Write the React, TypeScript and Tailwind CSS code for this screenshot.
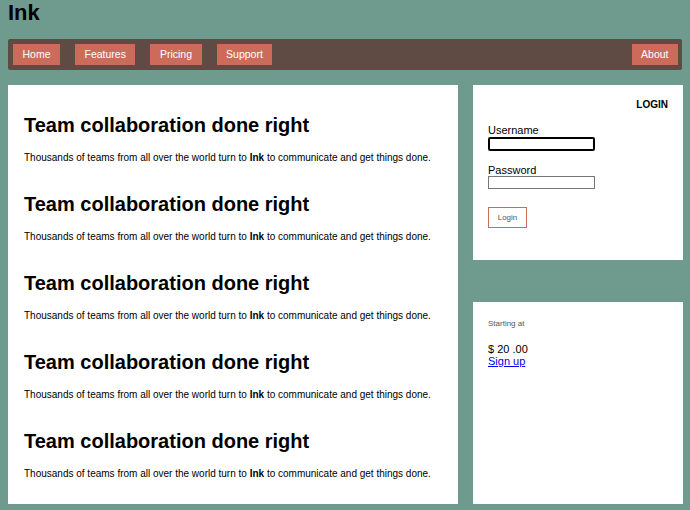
import React from "react";

const navItems = ["Home", "Features", "Pricing", "Support"];

const NavButton = ({ children }: { children: React.ReactNode }) => (
  <a className="flex h-[21px] items-center bg-[#cd6b5a] px-[9.5px] text-[10.5px] text-white">
    {children}
  </a>
);

const Feature = () => (
  <section>
    <h2 className="text-[20px] font-bold leading-[24px] text-black">
      Team collaboration done right
    </h2>
    <p className="mt-[15px] text-[10px] leading-[12px] text-black">
      Thousands of teams from all over the world turn to <b>Ink</b> to
      communicate and get things done.
    </p>
  </section>
);

export default function App() {
  return (
    <div className="min-h-[510px] bg-[#6f9a8e] font-['Liberation_Sans',Arial,sans-serif]">
      {/* Title */}
      <h1 className="px-[8px] pt-[1px] text-[22px] font-bold leading-[24px] text-black">
        Ink
      </h1>

      {/* Top nav */}
      <nav className="mx-[8px] mt-[14px] flex h-[31px] items-center rounded-[2px] bg-[#5f4b44] pl-[5px] pr-[4px]">
        <div className="flex gap-[15px]">
          {navItems.map((item) => (
            <NavButton key={item}>{item}</NavButton>
          ))}
        </div>
        <div className="ml-auto">
          <NavButton>About</NavButton>
        </div>
      </nav>

      {/* Body */}
      <div className="ml-[8px] mt-[15px] flex gap-[15px] pb-[6px]">
        <main className="flex h-[419px] w-[450px] shrink-0 flex-col gap-[28px] bg-white px-[16px] pt-[28px]">
          <Feature />
          <Feature />
          <Feature />
          <Feature />
          <Feature />
        </main>

        <aside className="flex w-[210px] shrink-0 flex-col gap-[42px]">
          {/* Login card */}
          <div className="h-[175px] bg-white px-[15px] pt-[14px]">
            <div className="text-right text-[10px] font-bold leading-[12px] text-black">
              LOGIN
            </div>
            <form className="mt-[14px] flex flex-col">
              <label className="text-[11px] leading-[11px] text-black">Username</label>
              <input
                type="text"
                className="mt-[1px] h-[14px] w-[107px] rounded-[2px] border-2 border-black bg-white outline-none"
              />
              <label className="mt-[14px] text-[11px] leading-[11px] text-black">Password</label>
              <input
                type="password"
                className="mt-0 h-[13px] w-[107px] border border-[#767676] bg-white outline-none"
              />
              <button
                type="button"
                className="mt-[18px] h-[21px] w-[39px] border border-[#cd6b5a] bg-white text-[8px] text-[#555]"
              >
                Login
              </button>
            </form>
          </div>

          {/* Pricing card */}
          <div className="h-[202px] bg-white px-[15px] pt-[17px]">
            <p className="text-[8px] leading-[10px] text-[#555]">Starting at</p>
            <p className="mt-[15px] text-[11px] leading-[11px] text-black">$ 20 .00</p>
            <a href="#" className="block text-[11px] leading-[12px] text-[#0000ee] underline">
              Sign up
            </a>
          </div>
        </aside>
      </div>
    </div>
  );
}
